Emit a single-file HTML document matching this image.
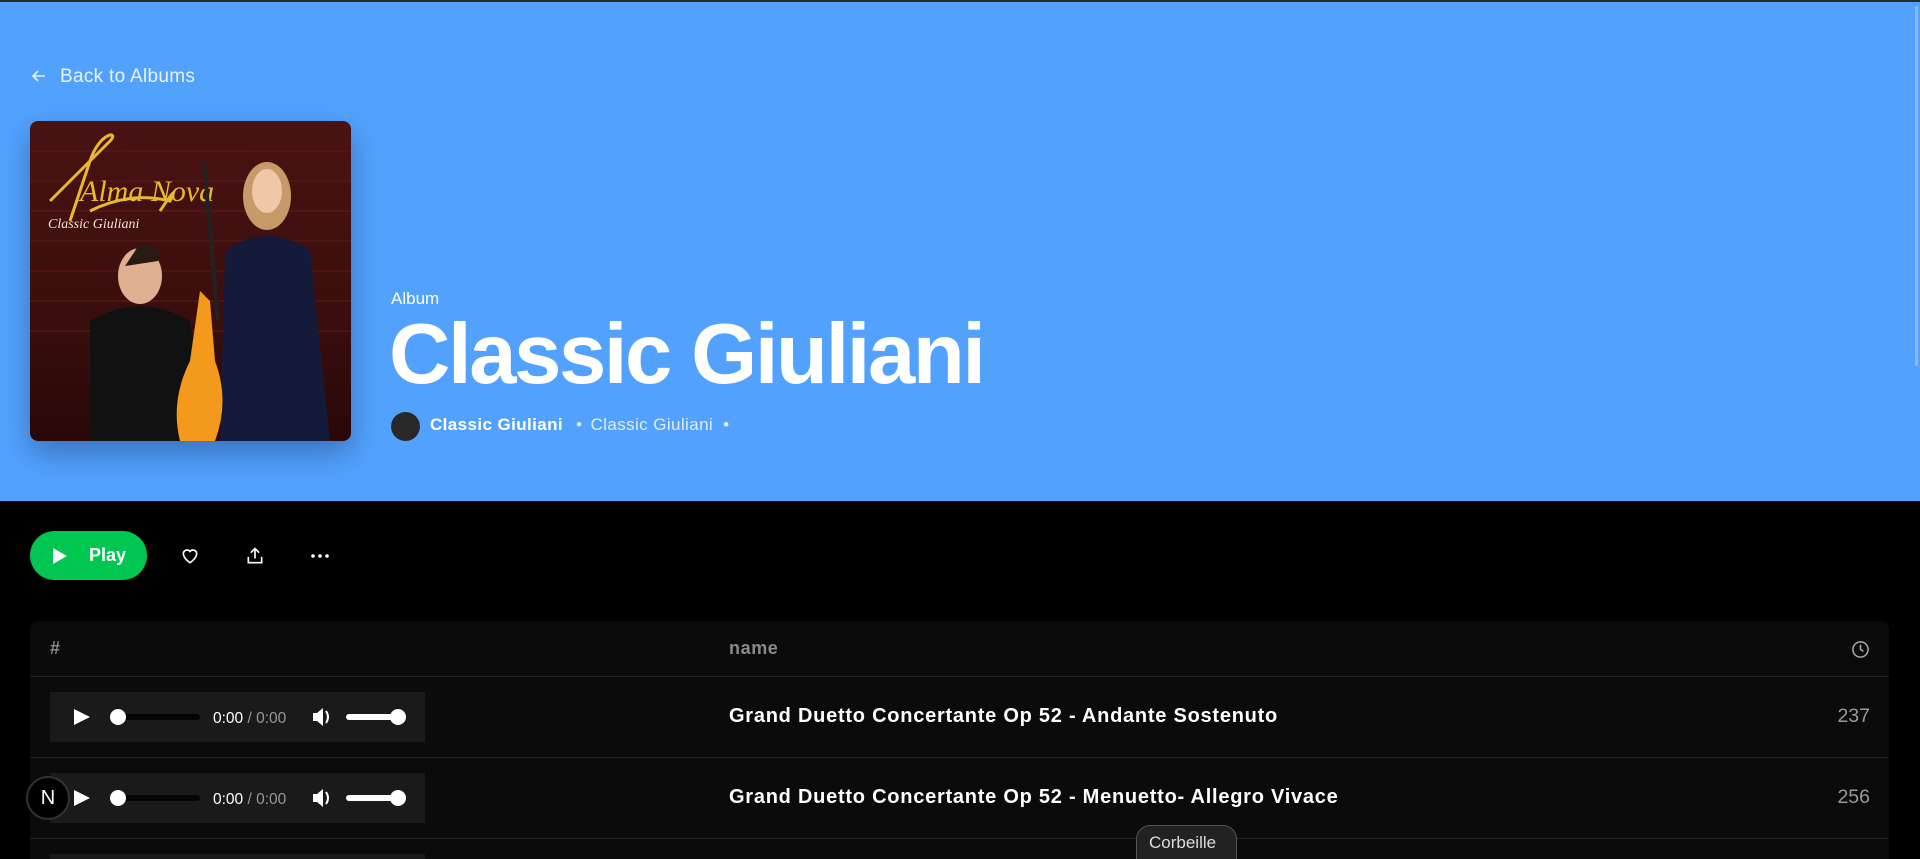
<!DOCTYPE html>
<html><head><meta charset="utf-8"><style>
*{margin:0;padding:0;box-sizing:border-box}
html,body{width:1920px;height:859px;overflow:hidden}
body{background:#000;font-family:"Liberation Sans",sans-serif;position:relative}
.hdr{position:absolute;left:0;top:0;width:1920px;height:501px;background:#52a2fd;border-top:2px solid #2a2a2a}
.abs{position:absolute}
.back{left:60px;top:66px;font-size:19px;color:#eaf3ff;letter-spacing:.3px}
.cover{left:30px;top:121px;width:321px;height:320px;border-radius:8px;overflow:hidden;box-shadow:0 12px 30px rgba(0,0,40,.3);background:linear-gradient(180deg,#4a1212 0%,#3a0e0e 60%,#2a0808 100%)}
.title{left:389px;top:312px;font-size:85px;font-weight:bold;color:#fff;letter-spacing:-2.4px;line-height:1}
.audio{position:absolute;left:50px;width:375px;height:50px;background:#1a1a1a}
.row{position:absolute;left:30px;width:1859px;height:1px;background:#222}
.tname{position:absolute;left:729px;font-size:20px;color:#fff;font-weight:bold;letter-spacing:.75px}
.dur{position:absolute;right:50px;font-size:19.5px;color:#9a9a9a}
</style></head><body>
<div class="hdr"></div>
<div class="abs" style="right:2px;top:6px;width:3px;height:360px;background:#8fb8e6;border-radius:2px"></div>
<svg class="abs" style="left:31px;top:68px" width="16" height="16" viewBox="0 0 16 16"><path d="M14 8H2M7 3L2 8l5 5" stroke="#eaf3ff" stroke-width="1.6" fill="none"/></svg>
<div class="abs back">Back to Albums</div>
<div class="abs cover">
<svg width="321" height="320" viewBox="0 0 321 320">
<g stroke="#5a1a18" stroke-width="2" opacity=".6"><path d="M0 30H321M0 60H321M0 90H321M0 120H321M0 150H321M0 180H321M0 210H321"/></g>
<path d="M20 80 C 40 60, 60 40, 80 20 C 90 10, 70 10, 60 40 L 40 100 M 60 90 Q 100 70 140 80 Q 150 60 130 90" stroke="#e8b830" stroke-width="3" fill="none"/>
<text x="50" y="80" font-family="Liberation Serif" font-style="italic" font-size="30" fill="#e8b830">Alma Nova</text>
<text x="18" y="107" font-family="Liberation Serif" font-style="italic" font-size="14" fill="#f0e8d0">Classic Giuliani</text>
<ellipse cx="237" cy="75" rx="24" ry="34" fill="#c79a6a"/>
<ellipse cx="237" cy="70" rx="15" ry="22" fill="#f0c8a8"/>
<path d="M195 130 Q 237 100 280 130 L 300 320 L 190 320 Z" fill="#141a3a"/>
<ellipse cx="110" cy="155" rx="22" ry="28" fill="#e0b090"/>
<path d="M105 130 Q110 118 130 130 L128 140 L95 145 Z" fill="#2a1a14"/>
<path d="M60 200 Q110 170 160 200 L180 320 L60 320 Z" fill="#111"/>
<path d="M170 170 L180 180 L185 240 Q200 280 185 320 L150 320 Q140 280 160 240 Z" fill="#f39a1c"/>
<rect x="172" y="40" width="4" height="160" fill="#222" transform="rotate(-5 172 40)"/>
</svg></div>
<div class="abs" style="left:391px;top:289px;font-size:17px;color:#fff">Album</div>
<div class="abs title">Classic Giuliani</div>
<div class="abs" style="left:391px;top:412px;width:29px;height:29px;border-radius:50%;background:#282828"></div>
<div class="abs" style="left:430px;top:415px;font-size:17px;color:#fff;font-weight:bold;letter-spacing:.4px">Classic Giuliani <span style="font-weight:normal;color:#e0ecff;margin:0 8px">•</span><span style="font-weight:normal;color:#e0ecff">Classic Giuliani</span><span style="font-weight:normal;color:#e0ecff;margin-left:10px">•</span></div>

<div class="abs" style="left:30px;top:531px;width:117px;height:49px;border-radius:25px;background:#00c751"></div>
<svg class="abs" style="left:52px;top:547px" width="16" height="18" viewBox="0 0 16 18"><path d="M1 1L15 9L1 17Z" fill="#fff"/></svg>
<div class="abs" style="left:89px;top:545px;font-size:18px;color:#fff;font-weight:bold">Play</div>
<svg class="abs" style="left:180px;top:546px" width="20" height="20" viewBox="0 0 24 24"><path d="M12 20s-8-5-8-11a4.5 4.5 0 0 1 8-2.5A4.5 4.5 0 0 1 20 9c0 6-8 11-8 11z" stroke="#fff" stroke-width="2" fill="none"/></svg>
<svg class="abs" style="left:245px;top:545px" width="20" height="22" viewBox="0 0 24 24"><path d="M12 15V3M7 8l5-5 5 5M4 13v7h16v-7" stroke="#fff" stroke-width="2" fill="none"/></svg>
<svg class="abs" style="left:310px;top:551px" width="20" height="10"><circle cx="3" cy="5" r="1.8" fill="#fff"/><circle cx="10" cy="5" r="1.8" fill="#fff"/><circle cx="17" cy="5" r="1.8" fill="#fff"/></svg>

<div class="abs" style="left:30px;top:621px;width:1859px;height:238px;background:#0b0b0b;border-radius:9px 9px 0 0"></div>
<div class="abs" style="left:50px;top:638px;font-size:18px;color:#8a8a8a;font-weight:bold">#</div>
<div class="abs" style="left:729px;top:638px;font-size:18px;color:#8a8a8a;font-weight:bold;letter-spacing:.6px">name</div>
<svg class="abs" style="left:1851px;top:640px" width="19" height="19" viewBox="0 0 20 20"><circle cx="10" cy="10" r="8" stroke="#aaa" stroke-width="1.6" fill="none"/><path d="M10 5v5l3 2" stroke="#aaa" stroke-width="1.6" fill="none"/></svg>
<div class="row" style="top:676px"></div>
<div class="row" style="top:757px"></div>
<div class="row" style="top:838px"></div>

<div class="audio" style="top:692px"></div>
<div class="audio" style="top:773px"></div>
<div class="audio" style="top:854px;height:5px"></div>
<svg class="abs" style="left:50px;top:692px" width="375" height="131">
<g id="ctl">
<path d="M24 17L40 25L24 33Z" fill="#fff"/>
<rect x="68" y="22" width="82" height="6" rx="3" fill="#050505"/>
<circle cx="68" cy="25" r="8" fill="#fff"/>
<text x="163" y="31" font-family="Liberation Sans" font-size="15.5" fill="#fff">0:00 <tspan fill="#999">/ 0:00</tspan></text>
<path d="M263 21h4l6-5v18l-6-5h-4z" fill="#fff"/><path d="M276 19q4 6 0 12" stroke="#fff" stroke-width="2" fill="none"/>
<rect x="296" y="22" width="52" height="6" rx="3" fill="#fff"/>
<circle cx="348" cy="25" r="8" fill="#fff"/>
</g>
<use href="#ctl" y="81"/>
</svg>
<div class="tname" style="top:705px">Grand Duetto Concertante Op 52 - Andante Sostenuto</div>
<div class="dur" style="top:705px">237</div>
<div class="tname" style="top:786px">Grand Duetto Concertante Op 52 - Menuetto- Allegro Vivace</div>
<div class="dur" style="top:786px">256</div>

<div class="abs" style="left:26px;top:776px;width:44px;height:44px;border-radius:50%;background:#000;border:2px solid #333;color:#fff;font-size:20px;text-align:center;line-height:40px">N</div>
<div class="abs" style="left:1136px;top:825px;width:101px;height:34px;border-radius:14px 14px 0 0;background:#222;border:1px solid #555;border-bottom:none;color:#ddd;font-size:17px;padding:7px 0 0 12px">Corbeille</div>
</body></html>
